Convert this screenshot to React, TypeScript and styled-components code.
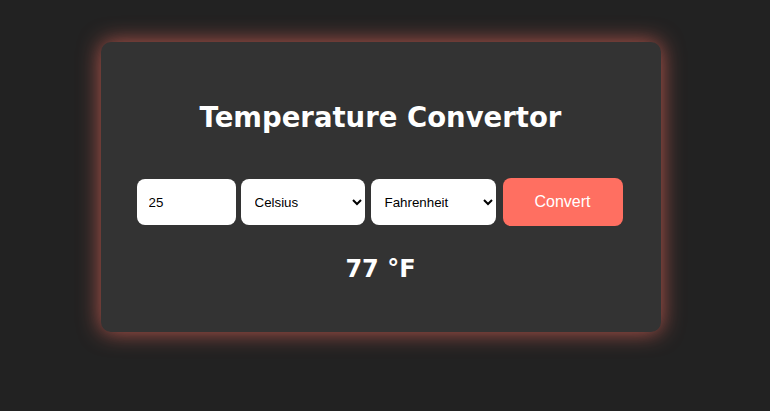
import styled, { createGlobalStyle } from "styled-components";

const GlobalStyle = createGlobalStyle`
  html, body {
    margin: 0;
    padding: 0;
    background: #222222;
    height: 100%;
  }
  #root {
    height: 100%;
  }
`;

const Page = styled.div`
  height: 411px;
  display: flex;
  justify-content: center;
  align-items: flex-start;
  padding-top: 42px;
  box-sizing: border-box;
  font-family: "Comic Sans MS", "DejaVu Sans", sans-serif;
`;

const Card = styled.div`
  width: 560px;
  height: 290px;
  margin-left: -9px;
  box-sizing: border-box;
  background: #333333;
  border-radius: 10px;
  box-shadow: 0 0 22px rgba(255, 111, 97, 0.7);
  display: flex;
  flex-direction: column;
  align-items: center;
  padding-top: 55px;
`;

const Title = styled.h1`
  margin: 0;
  color: #ffffff;
  font-size: 27.5px;
  line-height: 40px;
  font-weight: bold;
`;

const Row = styled.div`
  display: flex;
  align-items: center;
  gap: 5px;
  margin-top: 41px;
  margin-right: 2px;
`;

const NumberInput = styled.input`
  width: 99px;
  height: 46px;
  box-sizing: border-box;
  border: none;
  border-radius: 8px;
  padding: 0 12px;
  font-family: "Liberation Sans", Arial, sans-serif;
  font-size: 13.33px;
  color: #000;
  background: #fff;
  outline: none;
`;

const UnitSelect = styled.select<{ $w: number; $offset?: number }>`
  width: ${(p) => p.$w}px;
  height: 46px;
  margin-left: ${(p) => p.$offset ?? 0}px;
  box-sizing: border-box;
  border: none;
  border-radius: 8px;
  padding: 0 10px;
  font-family: "Liberation Sans", Arial, sans-serif;
  font-size: 13.33px;
  color: #000;
  background: #fff;
  outline: none;
`;

const ConvertButton = styled.button`
  width: 120px;
  height: 48px;
  margin-left: 2px;
  border: none;
  border-radius: 8px;
  background: #ff6f61;
  color: #ffffff;
  font-family: "Liberation Sans", Arial, sans-serif;
  font-size: 16px;
  cursor: pointer;
`;

const Result = styled.div`
  margin-top: 27px;
  color: #ffffff;
  font-size: 24px;
  font-weight: bold;
  line-height: 32px;
`;

const units = [
  { value: "celsius", label: "Celsius" },
  { value: "fahrenheit", label: "Fahrenheit" },
  { value: "kelvin", label: "Kelvin" },
];

export default function App() {
  return (
    <>
      <GlobalStyle />
      <Page>
        <Card>
          <Title>Temperature Convertor</Title>
          <Row>
            <NumberInput type="number" defaultValue={25} />
            <UnitSelect $w={124} defaultValue="celsius">
              {units.map((u) => (
                <option key={u.value} value={u.value}>
                  {u.label}
                </option>
              ))}
            </UnitSelect>
            <UnitSelect $w={125} $offset={1} defaultValue="fahrenheit">
              {units.map((u) => (
                <option key={u.value} value={u.value}>
                  {u.label}
                </option>
              ))}
            </UnitSelect>
            <ConvertButton>Convert</ConvertButton>
          </Row>
          <Result>77 °F</Result>
        </Card>
      </Page>
    </>
  );
}
